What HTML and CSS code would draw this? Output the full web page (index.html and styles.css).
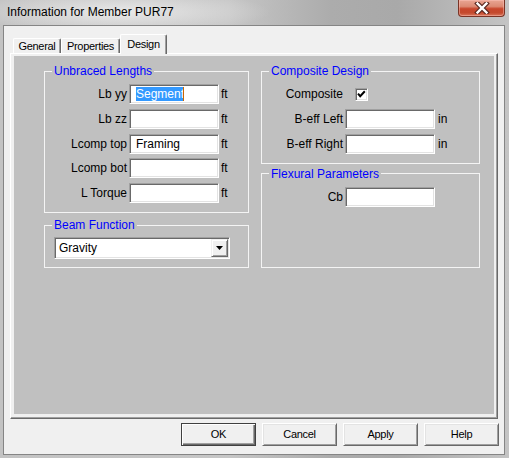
FILE: index.html
```html
<!DOCTYPE html>
<html>
<head>
<meta charset="utf-8">
<link rel="stylesheet" href="styles.css">
</head>
<body>
<div class="window">
  <div class="titlebar">
    <span class="title">Information for Member PUR77</span>
    <div class="close">
      <svg width="16" height="12" viewBox="0 0 16 12">
        <path d="M3.5 1.5 L12.5 10.5 M12.5 1.5 L3.5 10.5" stroke="#5a2a22" stroke-width="4.6" stroke-linecap="square" fill="none"/>
        <path d="M3.5 1.5 L12.5 10.5 M12.5 1.5 L3.5 10.5" stroke="#ffffff" stroke-width="2.4" stroke-linecap="square" fill="none"/>
      </svg>
    </div>
  </div>
  <div class="client">
    <div class="tabs">
      <div class="tab t-general">General</div>
      <div class="tab t-props">Properties</div>
      <div class="tab t-design active">Design</div>
    </div>
    <div class="panel">
      <div class="page">
        <div class="col">
          <fieldset class="group g-unbraced">
            <legend>Unbraced Lengths</legend>
            <div class="form form-left">
              <span class="lbl">Lb yy</span><div class="edit"><span class="sel">Segment</span><span class="caret"></span></div><span class="unit">ft</span>
              <span class="lbl">Lb zz</span><div class="edit"></div><span class="unit">ft</span>
              <span class="lbl">Lcomp top</span><div class="edit"><span class="val">Framing</span></div><span class="unit">ft</span>
              <span class="lbl">Lcomp bot</span><div class="edit"></div><span class="unit">ft</span>
              <span class="lbl">L Torque</span><div class="edit"></div><span class="unit">ft</span>
            </div>
          </fieldset>
          <fieldset class="group g-beam">
            <legend>Beam Function</legend>
            <div class="combo">
              <span class="combo-text">Gravity</span>
              <div class="drop">
                <svg width="7" height="4" viewBox="0 0 7 4"><path d="M0 0 H7 L3.5 4 Z" fill="#000"/></svg>
              </div>
            </div>
          </fieldset>
        </div>
        <div class="col">
          <fieldset class="group g-composite">
            <legend>Composite Design</legend>
            <div class="form form-right">
              <span class="lbl">Composite</span><div class="chkcell"><span class="check"><svg width="9" height="9" viewBox="0 0 9 9"><path d="M1 3.6 L3.2 6.2 L7.8 1.2" stroke="#000" stroke-width="2" fill="none"/></svg></span></div><span class="unit"></span>
              <span class="lbl">B-eff Left</span><div class="edit"></div><span class="unit">in</span>
              <span class="lbl">B-eff Right</span><div class="edit"></div><span class="unit">in</span>
            </div>
          </fieldset>
          <fieldset class="group g-flex">
            <legend>Flexural Parameters</legend>
            <div class="form form-right">
              <span class="lbl">Cb</span><div class="edit"></div><span class="unit"></span>
            </div>
          </fieldset>
        </div>
      </div>
    </div>
    <div class="buttons">
      <div class="btn default">OK</div>
      <div class="btn">Cancel</div>
      <div class="btn">Apply</div>
      <div class="btn">Help</div>
    </div>
  </div>
</div>
</body>
</html>
```
FILE: styles.css
```css
html, body {
  margin: 0;
  padding: 0;
}
body {
  font-family: "Liberation Sans", Arial, sans-serif;
  font-size: 12px;
  color: #000;
}
.window {
  width: 509px;
  height: 458px;
  overflow: hidden;
  background:
    radial-gradient(ellipse 150px 22px at 120px 12px, rgba(235,235,235,0.95), rgba(235,235,235,0) 100%),
    linear-gradient(to right, #c3c3c3 0%, #c6c6c6 45%, #acacac 65%, #a9a9a9 78%, #b8b8b8 90%, #c4c4c4 100%);
  display: flex;
  flex-direction: column;
}
.titlebar {
  height: 25px;
  display: flex;
  justify-content: space-between;
  align-items: flex-start;
  flex: none;
}
.title {
  padding: 5px 0 0 7px;
  line-height: 14px;
  font-size: 12px;
  color: #000;
}
.close {
  width: 47px;
  height: 17px;
  margin-right: 4px;
  box-sizing: border-box;
  border: 1px solid #7a3426;
  border-top: none;
  border-radius: 0 0 4px 4px;
  background: linear-gradient(to bottom, #e9a593 0%, #dc8a74 40%, #c8462c 55%, #c44a2e 80%, #d9775c 100%);
  box-shadow: inset 0 0 0 1px rgba(255,200,190,0.45);
  display: flex;
  align-items: center;
  justify-content: center;
}
.client {
  margin-left: 3px;
  width: 502px;
  height: 430px;
  box-sizing: border-box;
  border: 1px solid #858585;
  background: #f0f0f0;
  flex: none;
}
.tabs {
  display: flex;
  align-items: flex-end;
  height: 19px;
  margin-top: 8px;
  padding-left: 9px;
}
.tab {
  height: 15px;
  box-sizing: border-box;
  border: 1px solid #ffffff;
  border-right-color: #696969;
  border-bottom: none;
  border-radius: 2px 2px 0 0;
  box-shadow: inset -1px 0 0 #a0a0a0;
  background: #f0f0f0;
  line-height: 14px;
  font-size: 11px;
  letter-spacing: -0.3px;
  text-align: center;
}
.t-general { width: 48px; }
.t-props { width: 59px; }
.t-design { width: 47px; }
.tab.active {
  height: 20px;
  margin-bottom: -1px;
  padding-top: 2px;
  position: relative;
}
.panel {
  margin-left: 6px;
  width: 488px;
  height: 366px;
  box-sizing: border-box;
  border: 1px solid;
  border-color: #ffffff #696969 #696969 #ffffff;
  box-shadow: inset -1px -1px 0 #a0a0a0;
  padding: 2px 3px 4px 3px;
}
.page {
  height: 100%;
  box-sizing: border-box;
  background: #c0c0c0;
  padding: 8px 0 0 30px;
  display: grid;
  grid-template-columns: 205px 219px;
  column-gap: 12px;
  align-content: start;
}
.col {
  display: flex;
  flex-direction: column;
}
.group {
  margin: 0;
  padding: 0 0 9px 0;
  border: 1px solid #f4f4f4;
  min-inline-size: 0;
}
.group legend {
  margin-left: 7px;
  padding: 0 2px;
  color: #0000ff;
  line-height: 14px;
  font-size: 12px;
}
.g-beam {
  margin-top: 5px;
  padding-bottom: 8px;
}
.g-flex {
  margin-top: 3px;
  flex: 1;
}
.form {
  display: grid;
  grid-auto-rows: 20px;
  row-gap: 4.75px;
  margin-top: 6px;
  align-items: center;
}
.form-left {
  grid-template-columns: 82px 90px auto;
  column-gap: 2px;
}
.form-right {
  grid-template-columns: 81px 90px auto;
  column-gap: 2px;
}
.form-right .unit {
  padding-left: 1px;
}
.lbl {
  text-align: right;
  white-space: nowrap;
  line-height: 14px;
}
.unit {
  line-height: 14px;
}
.edit {
  height: 20px;
  box-sizing: border-box;
  background: #fff;
  border: 1px solid;
  border-color: #a0a0a0 #ffffff #ffffff #a0a0a0;
  box-shadow: inset 1px 1px 0 #696969, inset -1px -1px 0 #e3e3e3;
  padding: 2px 0 0 6px;
  display: flex;
  align-items: flex-start;
  line-height: 14px;
  white-space: nowrap;
}
.sel {
  background: #3399ff;
  color: #fff;
  height: 14px;
}
.caret {
  width: 1px;
  height: 14px;
  background: #cc6600;
  margin-left: -1px;
}
.chkcell {
  height: 20px;
  display: flex;
  align-items: center;
  padding-left: 10px;
}
.check {
  width: 13px;
  height: 13px;
  box-sizing: border-box;
  background: #fff;
  border: 1px solid;
  border-color: #a0a0a0 #ffffff #ffffff #a0a0a0;
  box-shadow: inset 1px 1px 0 #696969, inset -1px -1px 0 #e3e3e3;
  padding: 1px;
  display: flex;
}
.check svg {
  display: block;
  overflow: visible;
}
.combo {
  margin: 5px 0 0 9px;
  width: 176px;
  height: 22px;
  box-sizing: border-box;
  background: #fff;
  border: 1px solid;
  border-color: #a0a0a0 #ffffff #ffffff #a0a0a0;
  box-shadow: inset 1px 1px 0 #696969, inset -1px -1px 0 #e3e3e3;
  padding: 1px;
  display: flex;
  align-items: center;
}
.combo-text {
  flex: 1;
  padding-left: 3px;
  line-height: 14px;
}
.drop {
  width: 17px;
  height: 18px;
  box-sizing: border-box;
  background: #f0f0f0;
  border: 1px solid;
  border-color: #f0f0f0 #696969 #696969 #f0f0f0;
  box-shadow: inset 1px 1px 0 #ffffff, inset -1px -1px 0 #a0a0a0;
  display: flex;
  align-items: center;
  justify-content: center;
}
.drop svg {
  display: block;
}
.buttons {
  display: flex;
  justify-content: flex-end;
  gap: 6px;
  margin-top: 4px;
  padding-right: 5px;
}
.btn {
  width: 75px;
  height: 23px;
  box-sizing: border-box;
  background: #f0f0f0;
  border: 1px solid;
  border-color: #ffffff #696969 #696969 #ffffff;
  box-shadow: inset 1px 1px 0 #e3e3e3, inset -1px -1px 0 #a0a0a0;
  text-align: center;
  line-height: 20px;
  font-size: 11px;
  letter-spacing: -0.3px;
}
.btn.default {
  border-color: #404040;
  box-shadow: inset 1px 1px 0 #ffffff, inset -1px -1px 0 #696969, inset -2px -2px 0 #a0a0a0;
}
```
